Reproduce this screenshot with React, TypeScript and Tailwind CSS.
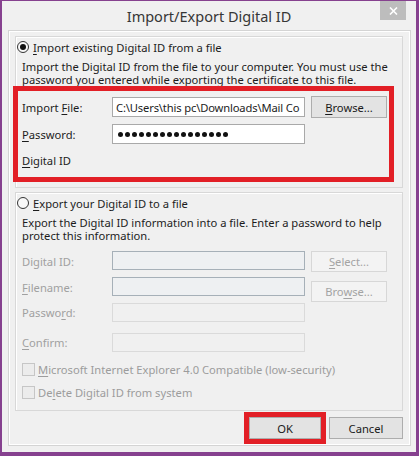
import React from 'react'

const font = { fontFamily: '"Noto Sans", "Open Sans", Arial, sans-serif' }

function Radio({ on }: { on?: boolean }) {
  return (
    <span className="w-[12px] h-[12px] rounded-full border border-[#333] bg-[#f8f8f8] flex items-center justify-center shrink-0">
      {on && <span className="w-[6px] h-[6px] rounded-full bg-[#111]" />}
    </span>
  )
}

function Check({ label }: { label: React.ReactNode }) {
  return (
    <div className="h-[14px] flex items-center pl-[6px] gap-[3px] text-[#9c9c9c]">
      <span className="w-[13px] h-[13px] border border-[#c6c6c6] bg-[#ececec] shrink-0" />
      <span>{label}</span>
    </div>
  )
}

function WinButton({ children, disabled, className = '' }: { children: React.ReactNode; disabled?: boolean; className?: string }) {
  return (
    <div
      className={
        'flex items-center justify-center border ' +
        (disabled ? 'border-[#d7d7d7] bg-[#f3f3f3] text-[#a3a3a3] ' : 'border-[#adadad] bg-[#e3e3e3] text-[#1a1a1a] ') +
        className
      }
    >
      {children}
    </div>
  )
}

export default function App() {
  return (
    <div
      style={font}
      className="w-[419px] h-[456px] bg-[#f0f0f0] border-t border-l-2 border-r-[3px] border-b-4 border-[#86418f] flex flex-col text-[11.2px] leading-[13px] text-[#1c1c1c] whitespace-nowrap"
    >
      {/* title bar */}
      <div className="h-[29px] shrink-0 grid grid-cols-[1fr_auto_1fr] items-start">
        <div />
        <div className="text-[14.5px] leading-[29px] text-[#363636] pt-[1px]">Import/Export Digital ID</div>
        <div className="flex justify-end pr-[10px]">
          <div className="w-[26px] h-[19px] bg-[#bdbdbd] flex items-center justify-center">
            <svg width="9" height="8" viewBox="0 0 9 8">
              <path d="M1 0.5 L8 7.5 M8 0.5 L1 7.5" stroke="#fff" strokeWidth="1.6" />
            </svg>
          </div>
        </div>
      </div>

      {/* client panel */}
      <div className="ml-[6px] mr-[5px] mb-[6px] h-[416px] border border-[#d4d4d4] shadow-[inset_1px_1px_0_#fff,inset_-1px_-1px_0_#fff] flex flex-col">
        {/* group 1 */}
        <div className="mt-[5px] ml-[6px] w-[388px] h-[152px] shrink-0 border border-[#d8d8d8] shadow-[inset_1px_1px_0_#fff] flex flex-col">
          <div className="mt-[3px] h-[14px] pl-[1px] flex items-center gap-[4px]">
            <Radio on />
            <span>
              <u className="underline-offset-2">I</u>mport existing Digital ID from a file
            </span>
          </div>
          <div className="mt-[6px] pl-[6px]">
            Import the Digital ID from the file to your computer. You must use the
            <br />
            password you entered while exporting the certificate to this file.
          </div>
          <div className="-ml-[3px] w-[381px] h-[96px] border-[5px] border-[#e21f26] flex flex-col">
            <div className="mt-[5px] h-[22px] flex items-center pl-[4px]">
              <span className="w-[90px]">
                Import <u className="underline-offset-2">F</u>ile:
              </span>
              <div className="w-[193px] h-[20px] border border-[#a9a9a9] bg-white flex items-center pl-[3px] overflow-hidden tracking-[-0.15px]">
                C:\Users\this pc\Downloads\Mail Co
              </div>
              <WinButton className="ml-[6px] w-[76px] h-[22px]">
                <span>
                  <u className="underline-offset-2">B</u>rowse...
                </span>
              </WinButton>
            </div>
            <div className="mt-[5px] h-[22px] flex items-center pl-[4px]">
              <span className="w-[90px]">
                <u className="underline-offset-2">P</u>assword:
              </span>
              <div className="w-[193px] h-[20px] border border-[#a9a9a9] bg-white flex items-center pl-[5px] gap-[2px]">
                {Array.from({ length: 16 }).map((_, i) => (
                  <span key={i} className="w-[5px] h-[5px] rounded-full bg-[#111]" />
                ))}
              </div>
            </div>
            <div className="mt-[9px] pl-[4px]">
              <u className="underline-offset-2">D</u>igital ID
            </div>
          </div>
        </div>

        {/* group 2 */}
        <div className="mt-[4px] ml-[6px] w-[388px] h-[219px] shrink-0 border border-[#d8d8d8] shadow-[inset_1px_1px_0_#fff] flex flex-col">
          <div className="mt-[3px] h-[14px] pl-[1px] flex items-center gap-[4px]">
            <Radio />
            <span>
              <u className="underline-offset-2">E</u>xport your Digital ID to a file
            </span>
          </div>
          <div className="mt-[6px] pl-[6px]">
            Export the Digital ID information into a file. Enter a password to help
            <br />
            protect this information.
          </div>

          <div className="mt-[9px] h-[21px] flex items-start pl-[6px] text-[#a0a0a0]">
            <span className="w-[90px] self-center">Digital ID:</span>
            <div className="w-[193px] h-[19px] border border-[#a6b0b8] bg-[#eef0f2]" />
            <WinButton disabled className="ml-[6px] w-[76px] h-[21px]">
              <span>
                <u className="underline-offset-2">S</u>elect...
              </span>
            </WinButton>
          </div>

          <div className="mt-[5px] h-[25px] flex items-start pl-[6px] text-[#a0a0a0]">
            <span className="w-[90px] mt-[4px]">
              <u className="underline-offset-2">F</u>ilename:
            </span>
            <div className="w-[193px] h-[19px] border border-[#a6b0b8] bg-[#eef0f2]" />
            <WinButton disabled className="ml-[6px] mt-[4px] w-[76px] h-[21px]">
              <span>
                Bro<u className="underline-offset-2">w</u>se...
              </span>
            </WinButton>
          </div>

          <div className="mt-[1px] h-[19px] flex items-center pl-[6px] text-[#a0a0a0]">
            <span className="w-[90px]">
              Passwo<u className="underline-offset-2">r</u>d:
            </span>
            <div className="w-[193px] h-[19px] border border-[#dadada] bg-[#f0f0f0]" />
          </div>

          <div className="mt-[11px] h-[19px] flex items-center pl-[6px] text-[#a0a0a0]">
            <span className="w-[90px]">
              <u className="underline-offset-2">C</u>onfirm:
            </span>
            <div className="w-[193px] h-[19px] border border-[#dadada] bg-[#f0f0f0]" />
          </div>

          <div className="mt-[10px]">
            <Check
              label={
                <>
                  <u className="underline-offset-2">M</u>icrosoft Internet Explorer 4.0 Compatible (low-security)
                </>
              }
            />
          </div>
          <div className="mt-[9px]">
            <Check
              label={
                <>
                  De<u className="underline-offset-2">l</u>ete Digital ID from system
                </>
              }
            />
          </div>
        </div>

        {/* buttons */}
        <div className="mt-[1px] h-[32px] flex items-center justify-end gap-[3px] pr-[7px]">
          <div className="w-[82px] h-[32px] border-[5px] border-[#e21f26] flex">
            <WinButton className="flex-1">OK</WinButton>
          </div>
          <WinButton className="w-[74px] h-[22px]">Cancel</WinButton>
        </div>
      </div>
    </div>
  )
}
